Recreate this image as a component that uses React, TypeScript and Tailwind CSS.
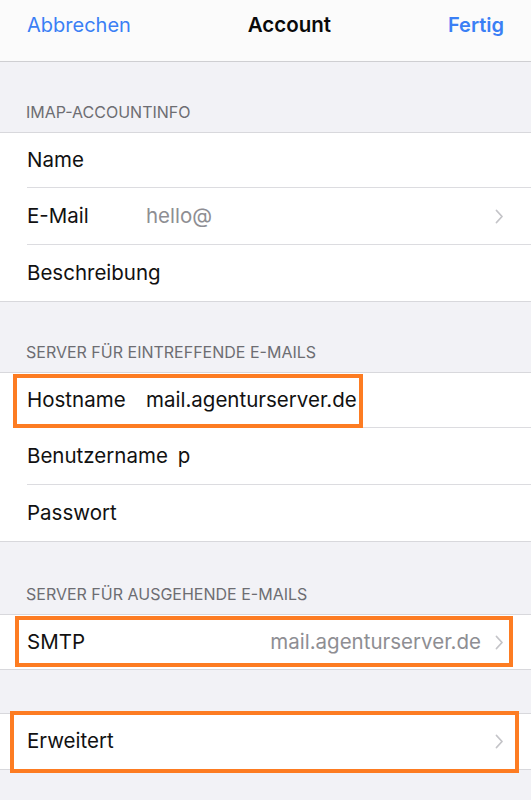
import React from "react";

const Chevron = () => (
  <svg width="9" height="15" viewBox="0 0 9 15" className="shrink-0">
    <path d="M1.5 1.5 L7 7.5 L1.5 13.5" fill="none" stroke="#c4c4c8" strokeWidth="1.8" strokeLinecap="round" strokeLinejoin="round" />
  </svg>
);

type RowProps = {
  label: string;
  value?: string;
  valueGray?: boolean;
  alignRight?: boolean;
  chevron?: boolean;
  separator?: boolean;
  highlight?: string;
  h?: string;
};

const Row = ({ label, value, valueGray, alignRight, chevron, separator, highlight, h = "h-[56px]" }: RowProps) => (
  <div className={`relative ${h} flex items-stretch pl-[27px]`}>
    <div className={`flex-1 flex items-center pr-[27px] ${separator ? "border-b border-[#dcdce0]" : ""}`}>
      <span className="min-w-[109px] text-[#111111] whitespace-nowrap">{label}</span>
      {value !== undefined && (
        <span
          className={`ml-[10px] whitespace-nowrap ${alignRight ? "flex-1 text-right" : "flex-1"} ${valueGray ? "text-[#8e8e93]" : "text-[#111111]"}`}
        >
          {value}
        </span>
      )}
      {value === undefined && <span className="flex-1" />}
      {chevron && <span className="ml-[14px] flex items-center"><Chevron /></span>}
    </div>
    {highlight && <div className={`absolute border-[4px] border-[#fd7c22] pointer-events-none ${highlight}`} />}
  </div>
);

const Header = ({ text, h }: { text: string; h: string }) => (
  <div className={`${h} flex items-end pl-[26px] pb-[8px] text-[16px] text-[#6d6d72]`}>{text}</div>
);

const Group = ({ children }: { children: React.ReactNode }) => (
  <div className="bg-white border-y border-[#d8d8dc]">{children}</div>
);

export default function App() {
  return (
    <div
      className="w-[531px] h-[800px] overflow-hidden bg-[#f2f2f6] text-[20.5px]"
      style={{ fontFamily: "Inter, 'Noto Sans', sans-serif" }}
    >
      <div className="h-[62px] bg-[#fbfbfb] border-b border-[#cfcfd2] flex items-start justify-between px-[27px] pt-[11px] text-[20px] leading-[28px]">
        <span className="text-[#3a7ff5]">Abbrechen</span>
        <span className="font-semibold text-[20.5px] text-[#0a0a0a]">Account</span>
        <span className="font-semibold text-[#3a7ff5]">Fertig</span>
      </div>

      <Header text="IMAP-ACCOUNTINFO" h="h-[70px]" />
      <Group>
        <Row label="Name" separator h="h-[55px]" />
        <Row label="E-Mail" value="hello@" valueGray chevron separator h="h-[57px]" />
        <Row label="Beschreibung" h="h-[56px]" />
      </Group>

      <Header text="SERVER FÜR EINTREFFENDE E-MAILS" h="h-[70px]" />
      <Group>
        <Row label="Hostname" value="mail.agenturserver.de" separator h="h-[55px]" highlight="left-[13px] w-[350px] top-[1px] h-[54px]" />
        <Row label="Benutzername" value="p" separator h="h-[57px]" />
        <Row label="Passwort" h="h-[56px]" />
      </Group>

      <Header text="SERVER FÜR AUSGEHENDE E-MAILS" h="h-[72px]" />
      <Group>
        <Row label="SMTP" value="mail.agenturserver.de" valueGray alignRight chevron h="h-[54px]" highlight="left-[15px] w-[498px] top-[1px] h-[51px]" />
      </Group>

      <div className="h-[43px]" />
      <Group>
        <Row label="Erweitert" chevron h="h-[55px]" highlight="left-[10px] w-[509px] -top-[3px] h-[62px]" />
      </Group>
    </div>
  );
}
